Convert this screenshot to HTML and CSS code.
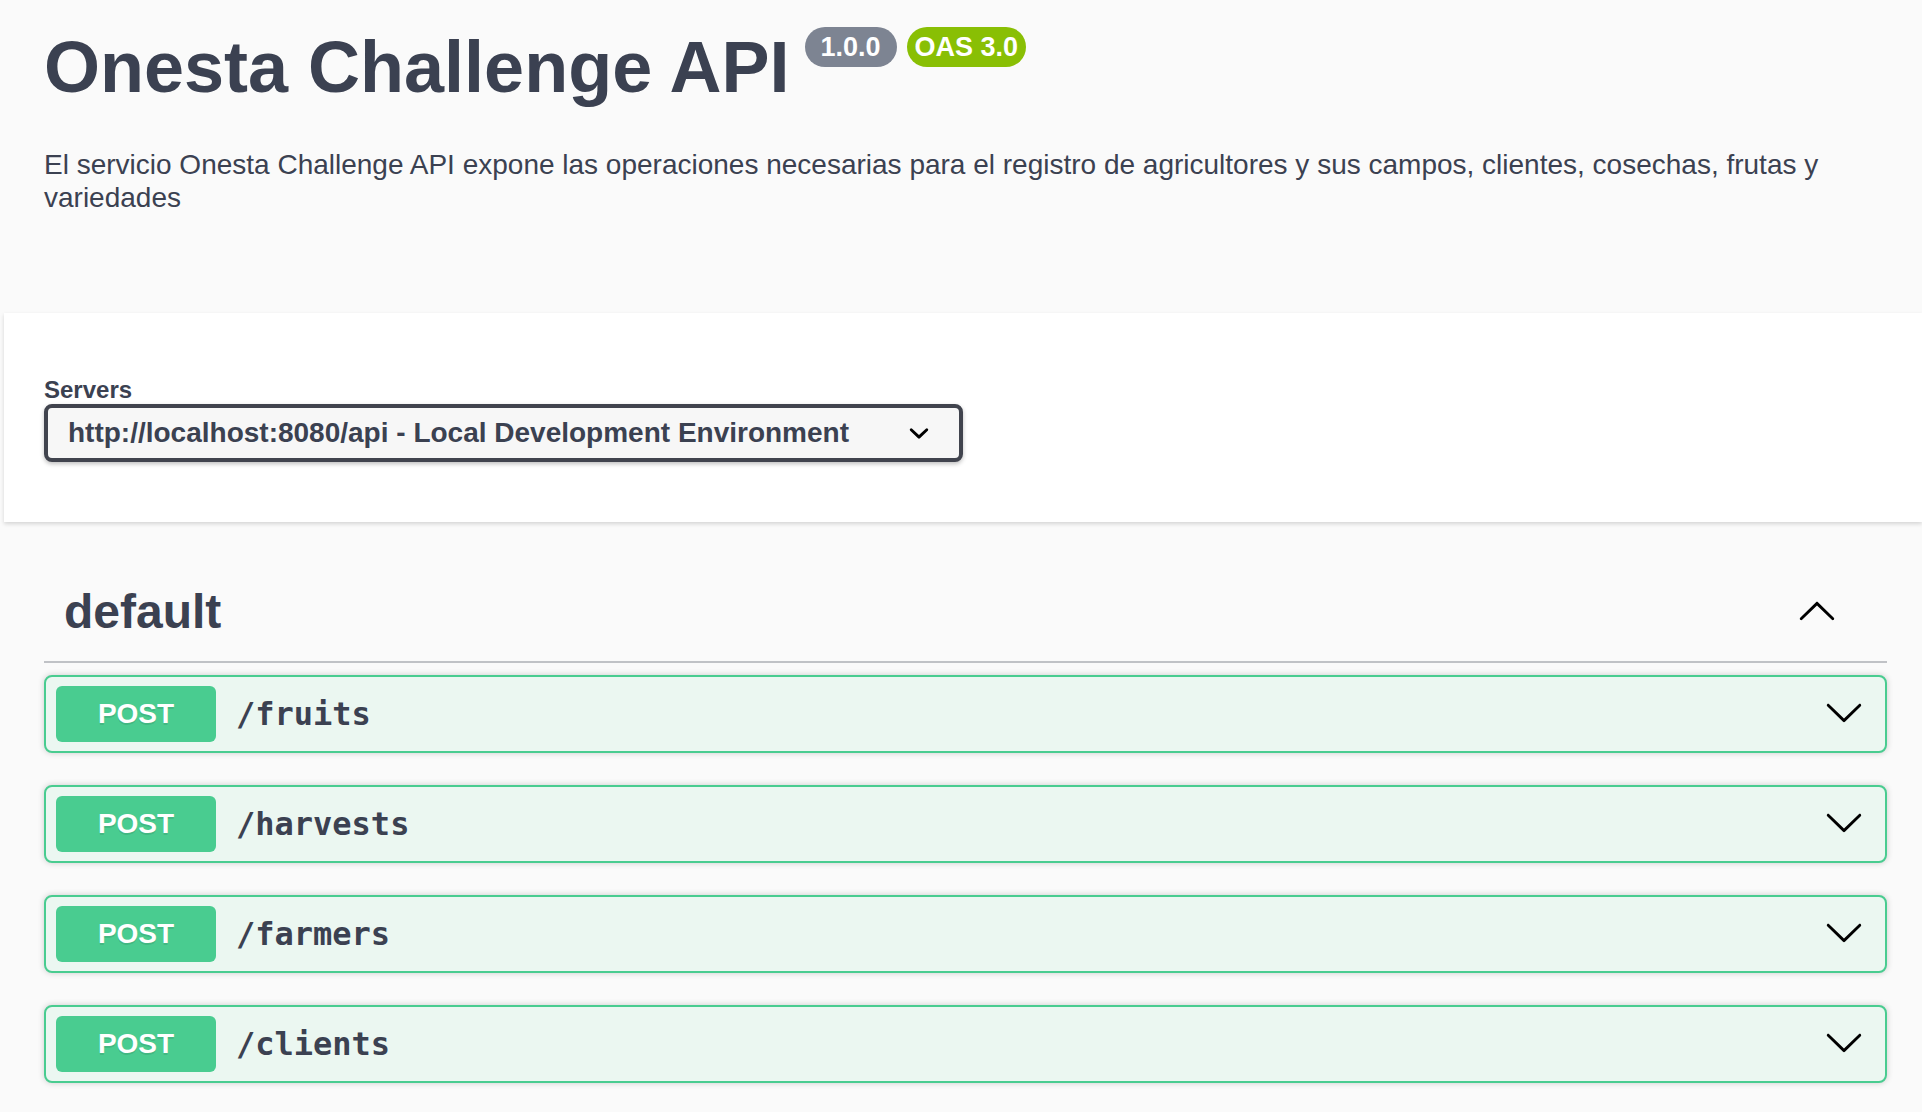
FILE: index.html
```html
<!DOCTYPE html>
<html lang="es">
<head>
<meta charset="utf-8">
<title>Onesta Challenge API</title>
<link rel="stylesheet" href="styles.css">
</head>
<body>
<div class="page">
  <div class="wrap info">
    <div class="title-row">
      <h1 class="title">Onesta Challenge API</h1>
      <span class="badge badge-version">1.0.0</span>
      <span class="badge badge-oas">OAS 3.0</span>
    </div>
    <p class="desc">El servicio Onesta Challenge API expone las operaciones necesarias para el registro de agricultores y sus campos, clientes, cosechas, frutas y variedades</p>
  </div>

  <div class="scheme">
    <div class="wrap">
      <div class="servers-title">Servers</div>
      <div class="select">
        <span class="select-text">http://localhost:8080/api - Local Development Environment</span>
        <svg class="select-arrow" viewBox="0 0 20 20" width="40" height="40"><path d="M13.418 7.859a.695.695 0 01.978 0 .68.68 0 010 .969l-3.908 3.83a.697.697 0 01-.979 0l-3.908-3.83a.68.68 0 010-.969.695.695 0 01.978 0L10 11z"/></svg>
      </div>
    </div>
  </div>

  <div class="wrap">
    <section class="tag">
      <h3 class="tag-head">
        <span class="tag-name">default</span>
        <svg class="arrow arrow-up" viewBox="0 0 20 20" width="40" height="40"><path d="M17.418 6.109c.272-.268.709-.268.979 0s.271.701 0 .969l-7.908 7.83c-.27.268-.707.268-.979 0l-7.908-7.830c-.27-.268-.27-.701 0-.969.271-.268.709-.268.979 0L10 13.25l7.418-7.141z"/></svg>
      </h3>

      <div class="opblock">
        <span class="method">POST</span>
        <span class="path">/fruits</span>
        <svg class="arrow arrow-down" viewBox="0 0 20 20" width="40" height="40"><path d="M17.418 6.109c.272-.268.709-.268.979 0s.271.701 0 .969l-7.908 7.83c-.27.268-.707.268-.979 0l-7.908-7.83c-.27-.268-.27-.701 0-.969.271-.268.709-.268.979 0L10 13.25l7.418-7.141z"/></svg>
      </div>
      <div class="opblock">
        <span class="method">POST</span>
        <span class="path">/harvests</span>
        <svg class="arrow arrow-down" viewBox="0 0 20 20" width="40" height="40"><path d="M17.418 6.109c.272-.268.709-.268.979 0s.271.701 0 .969l-7.908 7.83c-.27.268-.707.268-.979 0l-7.908-7.83c-.27-.268-.27-.701 0-.969.271-.268.709-.268.979 0L10 13.25l7.418-7.141z"/></svg>
      </div>
      <div class="opblock">
        <span class="method">POST</span>
        <span class="path">/farmers</span>
        <svg class="arrow arrow-down" viewBox="0 0 20 20" width="40" height="40"><path d="M17.418 6.109c.272-.268.709-.268.979 0s.271.701 0 .969l-7.908 7.83c-.27.268-.707.268-.979 0l-7.908-7.83c-.27-.268-.27-.701 0-.969.271-.268.709-.268.979 0L10 13.25l7.418-7.141z"/></svg>
      </div>
      <div class="opblock">
        <span class="method">POST</span>
        <span class="path">/clients</span>
        <svg class="arrow arrow-down" viewBox="0 0 20 20" width="40" height="40"><path d="M17.418 6.109c.272-.268.709-.268.979 0s.271.701 0 .969l-7.908 7.83c-.27.268-.707.268-.979 0l-7.908-7.83c-.27-.268-.27-.701 0-.969.271-.268.709-.268.979 0L10 13.25l7.418-7.141z"/></svg>
      </div>
    </section>
  </div>
</div>
</body>
</html>
```

FILE: styles.css
```css
html, body {
  margin: 0;
  padding: 0;
  background: #fafafa;
  font-family: "Liberation Sans", Arial, Helvetica, sans-serif;
  color: #3b4151;
}

.page {
  padding-left: 4px;
}

.wrap {
  padding: 0 35px 0 40px;
}

.info {
  padding-top: 26px;
}

.title-row {
  display: flex;
  align-items: flex-start;
}

.title {
  margin: 0;
  font-size: 72px;
  line-height: 82px;
  font-weight: 700;
  color: #3b4151;
}

.badge {
  margin-top: 1px;
  height: 40px;
  line-height: 40px;
  border-radius: 20px;
  color: #fff;
  font-weight: 700;
  font-size: 27px;
  white-space: nowrap;
}

.badge-version {
  margin-left: 15px;
  padding: 0 16px;
  background: #7d8492;
}

.badge-oas {
  margin-left: 10px;
  padding: 0 8px;
  background: #89bf04;
}

.desc {
  margin: 40px 0 0;
  font-size: 28px;
  line-height: 33px;
  color: #3b4151;
}

.scheme {
  margin-top: 99px;
  background: #fff;
  box-shadow: 0 2px 4px 0 rgba(0, 0, 0, 0.15);
  padding: 60px 0;
}

.servers-title {
  font-size: 24px;
  line-height: 28px;
  padding-top: 3px;
  font-weight: 700;
  color: #3b4151;
}

.select {
  margin-top: 0;
  box-sizing: border-box;
  width: 919px;
  height: 58px;
  display: flex;
  align-items: center;
  padding: 0 20px 0 20px;
  border: 4px solid #41444e;
  border-radius: 8px;
  background: #f7f7f7;
  box-shadow: 0 2px 4px 0 rgba(0, 0, 0, 0.25);
}

.select-text {
  font-size: 28px;
  font-weight: 700;
  color: #3b4151;
  white-space: nowrap;
}

.select-arrow {
  margin-left: auto;
  fill: #000;
}

.tag {
  margin-top: 41px;
}

.tag-head {
  margin: 0 0 12px;
  display: flex;
  align-items: center;
  padding: 20px 40px 20px 20px;
  border-bottom: 2px solid rgba(59, 65, 81, 0.3);
  font-size: 48px;
  line-height: 58px;
  font-weight: 700;
  color: #3b4151;
}

.tag-name {
  flex: 1;
}

.arrow {
  fill: #000;
  flex: none;
}

.arrow-up {
  transform: rotate(180deg);
  margin-right: 10px;
}

.arrow-down {
  margin-bottom: 5px;
}

.opblock {
  display: flex;
  align-items: center;
  margin-bottom: 32px;
  padding: 9px 21px 9px 10px;
  border: 2px solid #49cc90;
  border-radius: 8px;
  background: #ebf7f1;
  box-shadow: 0 0 6px rgba(0, 0, 0, 0.19);
}

.method {
  flex: none;
  width: 160px;
  height: 56px;
  line-height: 56px;
  text-align: center;
  border-radius: 6px;
  background: #49cc90;
  color: #fff;
  font-size: 28px;
  font-weight: 700;
  text-shadow: 0 2px 0 rgba(0, 0, 0, 0.1);
}

.path {
  flex: 1;
  padding: 0 20px;
  font-family: "DejaVu Sans Mono", "Liberation Mono", monospace;
  font-size: 32px;
  font-weight: 700;
  color: #3b4151;
}
```
